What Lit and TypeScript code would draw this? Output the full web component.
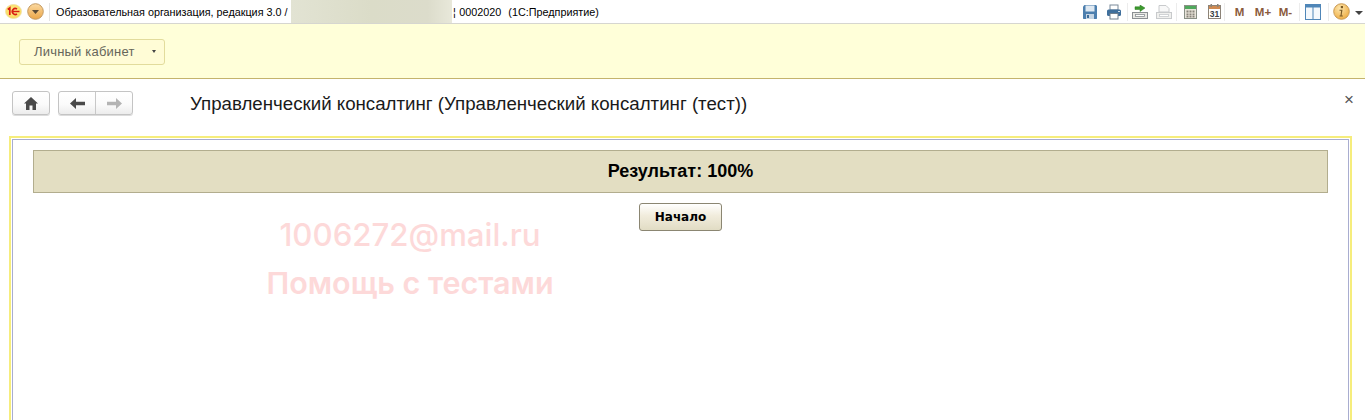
import { LitElement, html, css, svg } from "lit";
import { customElement } from "lit/decorators.js";

const saveIcon = svg`<svg width="16" height="16" viewBox="0 0 16 16"><path d="M1 2.500 2.500 1H14l1 1v12.500l-.5.5h-13L1 14.500z" fill="#4d7fae"/><rect x="3.500" y="1.500" width="9" height="6" fill="#dfe9f2"/><rect x="4" y="10" width="8" height="5" fill="#c6d5e3"/><rect x="5" y="11" width="2" height="3" fill="#3f6d99"/></svg>`;
const printIcon = svg`<svg width="16" height="16" viewBox="0 0 16 16"><rect x="4" y="1" width="8" height="5" fill="#fff" stroke="#7b8a99"/><rect x="1" y="5.500" width="14" height="6.500" rx="1.500" fill="#3f6f9c"/><rect x="4" y="9.500" width="8" height="5.500" fill="#fff" stroke="#6f7f8e"/><rect x="12" y="7" width="2" height="1" fill="#cfe0ee"/></svg>`;
const trayGreen = svg`<svg width="16" height="14" viewBox="0 0 16 14"><path d="M3 1.800H8V0L13 3 8 6.500V4.500H3z" fill="#3d9a2e" stroke="#2b7a20" stroke-width=".5"/><rect x=".5" y="7.500" width="15" height="6" fill="#e8e8e4" stroke="#8b8f93"/><rect x="3.500" y="9.500" width="9" height="2" fill="#fff" stroke="#8b8f93" stroke-width=".8"/></svg>`;
const trayGrey = svg`<svg width="16" height="14" viewBox="0 0 16 14"><path d="M3 .500h7l3 3V7H3z" fill="#f8f8f8" stroke="#c8cacc"/><rect x=".5" y="7.500" width="15" height="6" fill="#f0f0ee" stroke="#c8cacc"/><rect x="3.500" y="9.500" width="9" height="2" fill="#fff" stroke="#c8cacc" stroke-width=".8"/></svg>`;
const calcIcon = svg`<svg width="13" height="14" viewBox="0 0 13 14"><rect x=".5" y=".5" width="12" height="13" fill="#e8e4da" stroke="#8a9086"/><rect x="1" y="1" width="11" height="3" fill="#4fa85c"/><g fill="#8a857c"><rect x="2.500" y="5.500" width="2" height="2"/><rect x="5.500" y="5.500" width="2" height="2"/><rect x="8.500" y="5.500" width="2" height="2"/><rect x="2.500" y="8.500" width="2" height="2"/><rect x="5.500" y="8.500" width="2" height="2"/><rect x="8.500" y="8.500" width="2" height="2"/><rect x="2.500" y="11" width="2" height="1.500"/><rect x="5.500" y="11" width="2" height="1.500"/><rect x="8.500" y="11" width="2" height="1.500"/></g></svg>`;
const calIcon = svg`<svg width="13" height="15" viewBox="0 0 13 15"><rect x=".5" y="1.500" width="12" height="13" fill="#fff" stroke="#8c8378"/><rect x="1" y="2" width="11" height="3" fill="#cf8a52"/><rect x="2.500" y="0" width="1.500" height="3" fill="#8c8378"/><rect x="9" y="0" width="1.500" height="3" fill="#8c8378"/><text x="6.500" y="13" text-anchor="middle" font-family="Liberation Sans, sans-serif" font-size="8.500" font-weight="bold" fill="#3a3f48">31</text></svg>`;
const panelIcon = svg`<svg width="16" height="16" viewBox="0 0 16 16"><rect x=".5" y=".5" width="15" height="15" fill="#f4f8fc" stroke="#4f86b8"/><rect x="1" y="1" width="14" height="2.500" fill="#4f86b8"/><rect x="7.500" y="3" width="1" height="12" fill="#4f86b8"/></svg>`;
const infoIcon = svg`<svg width="17" height="17" viewBox="0 0 17 17"><defs><radialGradient id="ig" cx=".4" cy=".3" r=".8"><stop offset="0" stop-color="#fde6ad"/><stop offset="1" stop-color="#eda737"/></radialGradient></defs><circle cx="8.500" cy="8.500" r="7.800" fill="url(#ig)" stroke="#c99a55"/><rect x="7.800" y="3" width="2.200" height="2.200" fill="#7a5a25"/><path d="M6.500 6.800h3L8.600 12.500h1.200v1H6.600v-1h.9l.6-4.700H6.500z" fill="#7a5a25"/></svg>`;
const logo = svg`<svg width="17" height="15" viewBox="0 0 17 15"><defs><radialGradient id="lg" cx=".5" cy=".45" r=".65"><stop offset="0" stop-color="#fff39a"/><stop offset="1" stop-color="#f8d34e"/></radialGradient></defs><ellipse cx="8.500" cy="7.500" rx="8" ry="7" fill="url(#lg)" stroke="#f0dfa8" stroke-width=".8"/><path d="M2.800 5.500 4.800 4v7" fill="none" stroke="#d81f12" stroke-width="1.700"/><path d="M12 5a3 3 0 1 0 0 5M7 7.500h7.500" fill="none" stroke="#d81f12" stroke-width="1.700"/></svg>`;
const menuCircle = svg`<svg width="17" height="17" viewBox="0 0 17 17"><defs><linearGradient id="mg" x1="0" y1="0" x2="0" y2="1"><stop offset="0" stop-color="#fbd9a0"/><stop offset="1" stop-color="#eba648"/></linearGradient></defs><circle cx="8.500" cy="8.500" r="7.800" fill="url(#mg)" stroke="#c49a62"/><path d="M5 7h7l-3.500 4z" fill="#5a4a35"/></svg>`;
const homeIcon = svg`<svg width="14" height="13" viewBox="0 0 14 13"><path d="M7 0 14 6.500H12V13H8.500V8.500h-3V13H2V6.500H0z" fill="#4a4a4a"/></svg>`;
const arrowBack = (c: string) => svg`<svg width="15" height="11" viewBox="0 0 15 11"><path d="M0 5.500 6 0V3.800H15V7.200H6V11z" fill=${c}/></svg>`;
const arrowFwd = (c: string) => svg`<svg width="15" height="11" viewBox="0 0 15 11"><path d="M15 5.500 9 0V3.800H0V7.200H9V11z" fill=${c}/></svg>`;

@customElement("app-root")
export class AppRoot extends LitElement {
  static styles = css`
    :host { display: block; width: 1365px; height: 420px; overflow: hidden; background: #fff; position: relative; font-family: "Liberation Sans", Arial, sans-serif; color: #000; }
    .title { height: 23px; box-sizing: border-box; display: flex; align-items: center; background: #fff; font-size: 10.800px; padding-left: 5px; }
    .rule { height: 1px; background: #d6d6d0; }
    .logo { display: flex; margin-right: 5px; }
    .circ { display: flex; }
    .sep { width: 1px; height: 18px; background: #e4e4e4; margin: 0 6px 0 5px; }
    .caption { white-space: nowrap; }
    .blur { width: 161px; height: 23px; margin: 0 1px 0 0; background: linear-gradient(90deg, #e2e3d3, #dbdcc8 50%, #dcdccb 85%, #e8e8da); }
    .left { width: 235px; display: flex; }
    .caption2 { white-space: pre; word-spacing: .5px; }
    .tools { margin-left: auto; display: flex; align-items: center; height: 100%; padding-right: 2px; }
    .tools svg { display: block; }
    .t { display: flex; justify-content: center; }
    .tsep { width: 1px; height: 18px; background: #ececec; }
    .m { font-weight: bold; font-size: 11.500px; color: #8a5a3c; white-space: nowrap; }
    .caret { width: 0; height: 0; border-left: 4px solid transparent; border-right: 4px solid transparent; border-top: 4px solid #444; margin: 2px 0 0 2px; }
    .band { height: 54px; background: #ffffd9; display: flex; align-items: center; padding: 0 0 0 19px; box-sizing: border-box; }
    .bandline { height: 1px; background: #c4b46d; }
    .cab { width: 146px; height: 26px; box-sizing: border-box; margin-top: 1px; border: 1px solid #e2dc9c; border-radius: 3px; background: #fffcd6; display: flex; align-items: center; padding-left: 14px; font-size: 13px; letter-spacing: .2px; color: #66665a; }
    .cab i { width: 0; height: 0; border-left: 2.500px solid transparent; border-right: 2.500px solid transparent; border-top: 3px solid #444; margin-left: auto; margin-right: 8px; }
    .nav { height: 57px; box-sizing: border-box; display: flex; padding: 12px 0 0 12px; }
    .btn { height: 24px; box-sizing: border-box; border: 1px solid #c4c4c4; border-radius: 3px; background: linear-gradient(#fff, #fbfbfb 55%, #ececec); box-shadow: 0 1px 0 #dcdcdc; display: flex; align-items: center; justify-content: center; }
    .home { width: 38px; margin-right: 8px; }
    .hist { width: 75px; }
    .hist span { flex: 1; display: flex; justify-content: center; align-items: center; height: 100%; }
    .hist span + span { border-left: 1px solid #c8c8c8; }
    h1 { margin: 0 0 0 57px; padding-top: 1px; font-weight: normal; font-size: 18.700px; line-height: 24px; color: #1a1a1a; white-space: nowrap; }
    .close { margin-left: auto; margin-right: 11px; font-size: 17px; line-height: 17px; color: #555; }
    .frame { margin: 0 13px 0 9px; height: 400px; box-sizing: border-box; border: 2px solid #f6ed7c; padding: 1px; }
    .inner { height: 100%; box-sizing: border-box; border: 1px solid #a9add0; padding: 10px 20px 0 20px; display: flex; flex-direction: column; align-items: center; }
    .result { align-self: stretch; height: 43px; box-sizing: border-box; border: 1px solid #b2ad8e; background: #e3dec2; display: flex; align-items: center; justify-content: center; font-weight: bold; font-size: 18px; color: #000; }
    .start { margin-top: 10px; width: 83px; height: 28px; box-sizing: border-box; border: 1px solid #8b8672; border-radius: 3px; background: linear-gradient(#fff, #f1ecdc 45%, #e1dcc4); display: flex; align-items: center; justify-content: center; font-family: "DejaVu Sans", sans-serif; font-weight: bold; font-size: 12px; color: #000; }
    .wm { position: absolute; left: 266px; width: 288px; text-align: center; color: #fdd9d9; white-space: nowrap; font-family: Inter, sans-serif; }
    .wm1 { top: 216px; font-size: 31.200px; line-height: 38px; font-weight: 500; }
    .wm2 { top: 264px; font-size: 30.500px; line-height: 38px; font-weight: 600; }
  `;

  render() {
    const tool = (w: number, c: unknown) => html`<div class="t" style="width:${w}px">${c}</div>`;
    return html`
      <div class="title">
        <div class="logo">${logo}</div>
        <div class="circ">${menuCircle}</div>
        <div class="sep"></div>
        <div class="left"><span class="caption">Образовательная организация, редакция 3.0 /</span></div>
        <div class="blur"></div>
        <span class="caption2">¦ 0002020  (1С:Предприятие)</span>
        <div class="tools">
          ${tool(20, saveIcon)}${tool(27, printIcon)}<div class="tsep"></div>
          ${tool(23, trayGreen)}${tool(25, trayGrey)}<div class="tsep"></div>
          ${tool(27, calcIcon)}${tool(20, calIcon)}<div class="tsep"></div>
          ${tool(29, html`<span class="m">M</span>`)}${tool(18, html`<span class="m">M+</span>`)}${tool(27, html`<span class="m">M-</span>`)}<div class="tsep"></div>
          ${tool(26, panelIcon)}${tool(2, "")}<div class="tsep"></div>
          ${tool(24, infoIcon)}<div class="caret"></div>
        </div>
      </div>
      <div class="rule"></div>
      <div class="band"><div class="cab">Личный кабинет<i></i></div></div>
      <div class="bandline"></div>
      <div class="nav">
        <div class="btn home">${homeIcon}</div>
        <div class="btn hist"><span>${arrowBack("#4a4a4a")}</span><span>${arrowFwd("#b4b4b4")}</span></div>
        <h1>Управленческий консалтинг (Управленческий консалтинг (тест))</h1>
        <div class="close">×</div>
      </div>
      <div class="frame">
        <div class="inner">
          <div class="result">Результат: 100%</div>
          <div class="start">Начало</div>
        </div>
      </div>
      <div class="wm wm1">1006272@mail.ru</div>
      <div class="wm wm2">Помощь с тестами</div>
    `;
  }
}
